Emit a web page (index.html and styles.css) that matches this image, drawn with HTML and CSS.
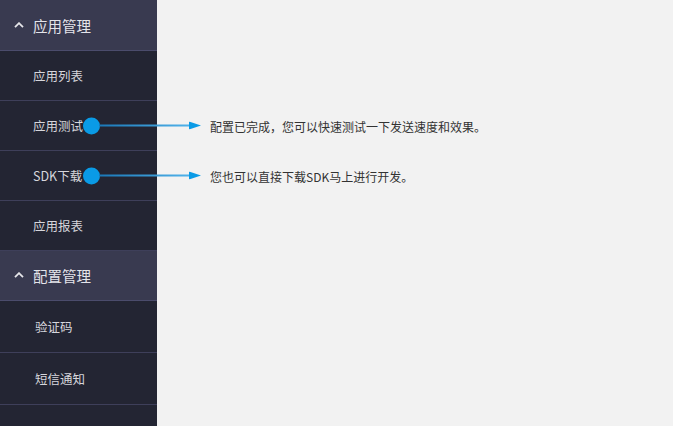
FILE: index.html
```html
<!DOCTYPE html>
<html lang="zh">
<head>
<meta charset="utf-8">
<link rel="stylesheet" href="styles.css">
</head>
<body>
<div class="page">
  <nav class="sidebar">
    <div class="group-head first"><svg class="caret" viewBox="0 0 10 6" width="10" height="6"><path d="M1 5.2 L5 1.2 L9 5.2" fill="none" stroke="#e6e6ea" stroke-width="1.8"/></svg><span>应用管理</span></div>
    <div class="nav-item">应用列表</div>
    <div class="nav-item">应用测试<div class="tip"><span class="dot"></span><span class="line"></span><svg class="head" viewBox="0 0 12 8" width="12" height="8"><path d="M0 0 L12 4 L0 8 Z" fill="#0b9be6"/></svg><span class="tip-text">配置已完成，您可以快速测试一下发送速度和效果。</span></div></div>
    <div class="nav-item">SDK下载<div class="tip"><span class="dot"></span><span class="line"></span><svg class="head" viewBox="0 0 12 8" width="12" height="8"><path d="M0 0 L12 4 L0 8 Z" fill="#0b9be6"/></svg><span class="tip-text">您也可以直接下载SDK马上进行开发。</span></div></div>
    <div class="nav-item">应用报表</div>
    <div class="group-head"><svg class="caret" viewBox="0 0 10 6" width="10" height="6"><path d="M1 5.2 L5 1.2 L9 5.2" fill="none" stroke="#e6e6ea" stroke-width="1.8"/></svg><span>配置管理</span></div>
    <div class="nav-item tall sub">验证码</div>
    <div class="nav-item tall sub">短信通知</div>
    <div class="nav-item tall sub"></div>
  </nav>
  <main class="main"></main>
</div>
</body>
</html>
```
FILE: styles.css
```css
html, body {
  margin: 0;
  padding: 0;
  height: 100%;
  overflow: hidden;
}
body {
  background: #f2f2f2;
  font-family: "Noto Sans CJK SC", "Noto Sans", sans-serif;
}
.page {
  display: flex;
  height: 426px;
  overflow: hidden;
}
.sidebar {
  width: 157px;
  flex: none;
  background: #232533;
  display: flex;
  flex-direction: column;
}
.main {
  flex: 1;
  background: #f2f2f2;
}
.group-head {
  flex: none;
  height: 50px;
  box-sizing: border-box;
  background: #393a50;
  border-bottom: 1px solid #4b4c6c;
  display: flex;
  align-items: center;
  padding-left: 14px;
  gap: 9px;
  color: #e4e4ea;
  font-size: 14.5px;
}
.group-head.first {
  height: 51px;
}
.caret {
  display: block;
  margin-top: -1px;
}
.nav-item {
  flex: none;
  position: relative;
  height: 50px;
  box-sizing: border-box;
  border-bottom: 1px solid #3e3f5a;
  display: flex;
  align-items: center;
  padding-left: 33px;
  color: #d6d6dc;
  font-size: 12.5px;
}
.nav-item.tall {
  height: 52px;
}
.nav-item.sub {
  padding-left: 35px;
}
.tip {
  position: absolute;
  left: 83px;
  top: 50%;
  transform: translateY(-50%);
  display: flex;
  align-items: center;
  white-space: nowrap;
}
.dot {
  width: 17px;
  height: 17px;
  border-radius: 50%;
  background: #0a9be6;
  flex: none;
}
.line {
  width: 91px;
  height: 2px;
  margin-left: -1px;
  background: linear-gradient(to right, #1a78b8, #4fb2ea);
  flex: none;
}
.head {
  display: block;
  flex: none;
  margin-left: -1px;
}
.tip-text {
  margin-left: 9px;
  color: #333333;
  font-size: 12px;
}
```
